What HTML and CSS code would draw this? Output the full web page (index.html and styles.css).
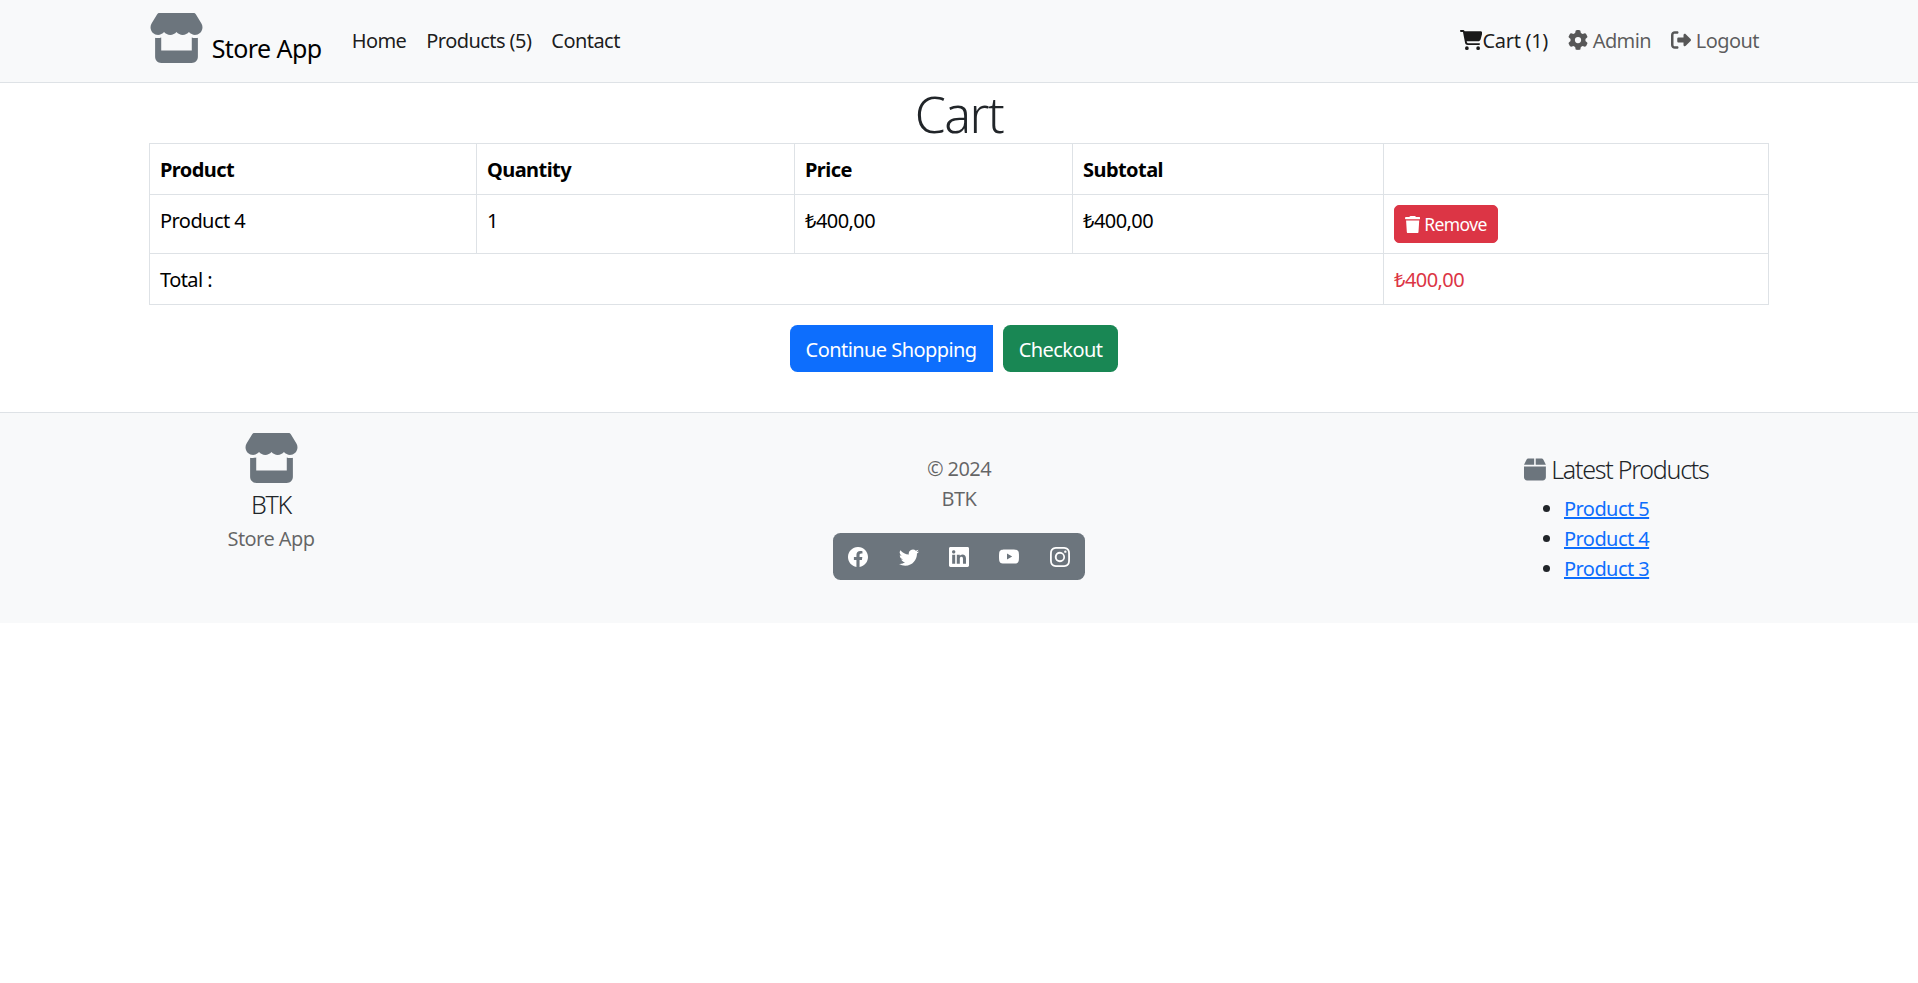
FILE: index.html
```html
<!DOCTYPE html>
<html lang="en">
<head>
  <meta charset="UTF-8" />
  <meta name="viewport" content="width=device-width, initial-scale=1.0">
  <title>Cart</title>
  <link rel="stylesheet" href="styles.css">
</head>
<body>
  <nav class="navbar">
    <div class="wrap nav-inner">
      <a class="brand" href="#">
        <svg class="store-icon" viewBox="0 0 576 512" preserveAspectRatio="none"><path d="M547.6 103.8L490.3 13.1C485.2 5 476.1 0 466.4 0H109.6C99.9 0 90.8 5 85.7 13.1L28.3 103.8c-29.6 46.8-3.4 111.9 51.9 119.4c4 .5 8.1 .8 12.1 .8c26.1 0 49.3-11.4 65.2-29c15.9 17.6 39.1 29 65.2 29c26.1 0 49.3-11.4 65.2-29c15.9 17.6 39.1 29 65.2 29c26.2 0 49.3-11.4 65.2-29c16 17.6 39.1 29 65.2 29c4.1 0 8.1-.3 12.1-.8c55.5-7.4 81.8-72.5 52.1-119.4zM499.7 254.9l-.1 0c-5.3 .7-10.7 1.1-16.2 1.1c-12.4 0-24.3-1.9-35.4-5.3V384H128V250.6c-11.2 3.5-23.2 5.4-35.6 5.4c-5.5 0-11-.4-16.3-1.1l-.1 0c-4.1-.6-8.1-1.3-12-2.3V384v64c0 35.3 28.7 64 64 64H448c35.3 0 64-28.7 64-64V384 252.6c-4 1-8 1.8-12.3 2.3z"/></svg>
        <span class="brand-text">Store App</span>
      </a>
      <ul class="nav-links">
        <li><a class="nav-link" href="#">Home</a></li>
        <li><a class="nav-link" href="#">Products (5)</a></li>
        <li><a class="nav-link" href="#">Contact</a></li>
      </ul>
      <ul class="nav-links nav-right">
        <li><a class="nav-link cart-link" href="#"><svg class="icon" viewBox="0 0 576 512"><path d="M0 24C0 10.7 10.7 0 24 0H69.5c22 0 41.5 12.8 50.6 32h411c26.3 0 45.5 25 38.6 50.4l-41 152.3c-8.5 31.4-37 53.3-69.5 53.3H170.7l5.4 28.5c2.2 11.3 12.1 19.5 23.6 19.5H488c13.3 0 24 10.7 24 24s-10.7 24-24 24H199.7c-34.6 0-64.3-24.6-70.7-58.5L77.4 54.5c-.7-3.8-4-6.5-7.9-6.5H24C10.7 48 0 37.3 0 24zM128 464a48 48 0 1 1 96 0 48 48 0 1 1 -96 0zm336-48a48 48 0 1 1 0 96 48 48 0 1 1 0-96z"/></svg>Cart (1)</a></li>
        <li><a class="nav-link muted" href="#"><svg class="icon" viewBox="0 0 512 512"><path d="M495.9 166.6c3.2 8.7 .5 18.4-6.4 24.6l-43.3 39.4c1.1 8.3 1.7 16.8 1.7 25.4s-.6 17.1-1.7 25.4l43.3 39.4c6.9 6.2 9.6 15.9 6.4 24.6c-4.4 11.9-9.7 23.3-15.8 34.3l-4.7 8.1c-6.6 11-14 21.4-22.1 31.2c-5.9 7.2-15.7 9.6-24.5 6.8l-55.7-17.7c-13.4 10.3-28.2 18.9-44 25.4l-12.5 57.1c-2 9.1-9 16.3-18.2 17.8c-13.8 2.3-28 3.5-42.5 3.5s-28.7-1.2-42.5-3.5c-9.2-1.5-16.2-8.7-18.2-17.8l-12.5-57.1c-15.8-6.5-30.6-15.1-44-25.4L83.1 425.9c-8.8 2.8-18.6 .3-24.5-6.8c-8.1-9.8-15.5-20.2-22.1-31.2l-4.7-8.1c-6.1-11-11.4-22.4-15.8-34.3c-3.2-8.7-.5-18.4 6.4-24.6l43.3-39.4C64.6 273.1 64 264.6 64 256s.6-17.1 1.7-25.4L22.4 191.2c-6.9-6.2-9.6-15.9-6.4-24.6c4.4-11.9 9.7-23.3 15.8-34.3l4.7-8.1c6.6-11 14-21.4 22.1-31.2c5.9-7.2 15.7-9.6 24.5-6.8l55.7 17.7c13.4-10.3 28.2-18.9 44-25.4l12.5-57.1c2-9.1 9-16.3 18.2-17.8C227.3 1.2 241.5 0 256 0s28.7 1.2 42.5 3.5c9.2 1.5 16.2 8.7 18.2 17.8l12.5 57.1c15.8 6.5 30.6 15.1 44 25.4l55.7-17.7c8.8-2.8 18.6-.3 24.5 6.8c8.1 9.8 15.5 20.2 22.1 31.2l4.7 8.1c6.1 11 11.4 22.4 15.8 34.3zM256 336a80 80 0 1 0 0-160 80 80 0 1 0 0 160z"/></svg> Admin</a></li>
        <li><a class="nav-link muted" href="#"><svg class="icon" viewBox="0 0 512 512"><path d="M377.9 105.9L500.7 228.7c7.2 7.2 11.3 17.1 11.3 27.3s-4.1 20.1-11.3 27.3L377.9 406.1c-6.4 6.4-15 9.9-24 9.9c-18.7 0-33.9-15.2-33.9-33.9l0-62.1-128 0c-17.7 0-32-14.3-32-32l0-64c0-17.7 14.3-32 32-32l128 0 0-62.1c0-18.7 15.2-33.9 33.9-33.9c9 0 17.6 3.6 24 9.9zM160 96L96 96c-17.7 0-32 14.3-32 32l0 256c0 17.7 14.3 32 32 32l64 0c17.7 0 32 14.3 32 32s-14.3 32-32 32l-64 0c-53 0-96-43-96-96L0 128C0 75 43 32 96 32l64 0c17.7 0 32 14.3 32 32s-14.3 32-32 32z"/></svg> Logout</a></li>
      </ul>
    </div>
  </nav>

  <main class="wrap">
    <h1 class="page-title">Cart</h1>
    <table class="cart-table">
      <colgroup>
        <col class="col-product">
        <col class="col-qty">
        <col class="col-price">
        <col class="col-subtotal">
        <col>
      </colgroup>
      <thead>
        <tr>
          <th>Product</th>
          <th>Quantity</th>
          <th>Price</th>
          <th>Subtotal</th>
          <th></th>
        </tr>
      </thead>
      <tbody>
        <tr>
          <td>Product 4</td>
          <td>1</td>
          <td>₺400,00</td>
          <td>₺400,00</td>
          <td class="action-cell">
            <button class="btn-remove"><svg class="icon" viewBox="0 0 448 512"><path d="M135.2 17.7L128 32H32C14.3 32 0 46.3 0 64S14.3 96 32 96H416c17.7 0 32-14.3 32-32s-14.3-32-32-32H320l-7.2-14.3C307.4 6.8 296.3 0 284.2 0H163.8c-12.1 0-23.2 6.8-28.6 17.7zM416 128H32L53.2 467c1.6 25.3 22.6 45 47.9 45H346.9c25.3 0 46.3-19.7 47.9-45L416 128z"/></svg> Remove</button>
          </td>
        </tr>
        <tr>
          <td colspan="4">Total :</td>
          <td class="total">₺400,00</td>
        </tr>
      </tbody>
    </table>
    <div class="cart-actions">
      <a class="btn btn-primary" href="#">Continue Shopping</a>
      <a class="btn btn-success" href="#">Checkout</a>
    </div>
  </main>

  <footer class="footer">
    <div class="wrap footer-grid">
      <div class="footer-brand">
        <svg class="store-icon" viewBox="0 0 576 512" preserveAspectRatio="none"><path d="M547.6 103.8L490.3 13.1C485.2 5 476.1 0 466.4 0H109.6C99.9 0 90.8 5 85.7 13.1L28.3 103.8c-29.6 46.8-3.4 111.9 51.9 119.4c4 .5 8.1 .8 12.1 .8c26.1 0 49.3-11.4 65.2-29c15.9 17.6 39.1 29 65.2 29c26.1 0 49.3-11.4 65.2-29c15.9 17.6 39.1 29 65.2 29c26.2 0 49.3-11.4 65.2-29c16 17.6 39.1 29 65.2 29c4.1 0 8.1-.3 12.1-.8c55.5-7.4 81.8-72.5 52.1-119.4zM499.7 254.9l-.1 0c-5.3 .7-10.7 1.1-16.2 1.1c-12.4 0-24.3-1.9-35.4-5.3V384H128V250.6c-11.2 3.5-23.2 5.4-35.6 5.4c-5.5 0-11-.4-16.3-1.1l-.1 0c-4.1-.6-8.1-1.3-12-2.3V384v64c0 35.3 28.7 64 64 64H448c35.3 0 64-28.7 64-64V384 252.6c-4 1-8 1.8-12.3 2.3z"/></svg>
        <h5 class="footer-title">BTK</h5>
        <p class="footer-sub">Store App</p>
      </div>
      <div class="footer-middle">
        <p class="copy">© 2024<br>BTK</p>
        <div class="social">
          <a href="#"><svg class="social-icon" viewBox="0 0 16 16"><path d="M16 8.049c0-4.446-3.582-8.05-8-8.05C3.58 0-.002 3.603-.002 8.05c0 4.017 2.926 7.347 6.75 7.951v-5.625h-2.03V8.05H6.75V6.275c0-2.017 1.195-3.131 3.022-3.131.876 0 1.791.157 1.791.157v1.98h-1.009c-.993 0-1.303.621-1.303 1.258v1.51h2.218l-.354 2.326H9.25V16c3.824-.604 6.75-3.934 6.75-7.951z"/></svg></a>
          <a href="#"><svg class="social-icon" viewBox="0 0 16 16"><path d="M5.026 15c6.038 0 9.341-5.003 9.341-9.334 0-.14 0-.282-.006-.422A6.685 6.685 0 0 0 16 3.542a6.658 6.658 0 0 1-1.889.518 3.301 3.301 0 0 0 1.447-1.817 6.533 6.533 0 0 1-2.087.793A3.286 3.286 0 0 0 7.875 6.03a9.325 9.325 0 0 1-6.767-3.429 3.289 3.289 0 0 0 1.018 4.382A3.323 3.323 0 0 1 .64 6.575v.045a3.288 3.288 0 0 0 2.632 3.218 3.203 3.203 0 0 1-.865.115 3.23 3.23 0 0 1-.614-.057 3.283 3.283 0 0 0 3.067 2.277A6.588 6.588 0 0 1 .78 13.58a6.32 6.32 0 0 1-.78-.045A9.344 9.344 0 0 0 5.026 15z"/></svg></a>
          <a href="#"><svg class="social-icon" viewBox="0 0 16 16"><path d="M0 1.146C0 .513.526 0 1.175 0h13.65C15.474 0 16 .513 16 1.146v13.708c0 .633-.526 1.146-1.175 1.146H1.175C.526 16 0 15.487 0 14.854V1.146zm4.943 12.248V6.169H2.542v7.225h2.401zm-1.2-8.212c.837 0 1.358-.554 1.358-1.248-.015-.709-.52-1.248-1.342-1.248-.822 0-1.359.54-1.359 1.248 0 .694.521 1.248 1.327 1.248h.016zm4.908 8.212V9.359c0-.216.016-.432.08-.586.173-.431.568-.878 1.232-.878.869 0 1.216.662 1.216 1.634v3.865h2.401V9.25c0-2.22-1.184-3.252-2.764-3.252-1.274 0-1.845.7-2.165 1.193v.025h-.016a5.54 5.54 0 0 1 .016-.025V6.169h-2.4c.03.678 0 7.225 0 7.225h2.4z"/></svg></a>
          <a href="#"><svg class="social-icon" viewBox="0 0 16 16"><path d="M8.051 1.999h.089c.822.003 4.987.033 6.11.335a2.01 2.01 0 0 1 1.415 1.42c.101.38.172.883.22 1.402l.01.104.022.26.008.104c.065.914.073 1.77.074 1.957v.075c-.001.194-.01 1.108-.082 2.06l-.008.105-.009.104c-.05.572-.124 1.14-.235 1.558a2.007 2.007 0 0 1-1.415 1.42c-1.16.312-5.569.334-6.18.335h-.142c-.309 0-1.587-.006-2.927-.052l-.17-.006-.087-.004-.171-.007-.171-.007c-1.11-.049-2.167-.128-2.654-.26a2.007 2.007 0 0 1-1.415-1.419c-.111-.417-.185-.986-.235-1.558L.09 9.82l-.008-.104A31.4 31.4 0 0 1 0 7.68v-.123c.002-.215.01-.958.064-1.778l.007-.103.003-.052.008-.104.022-.26.01-.104c.048-.519.119-1.023.22-1.402a2.007 2.007 0 0 1 1.415-1.42c.487-.13 1.544-.21 2.654-.26l.17-.007.172-.006.086-.003.171-.007A99.788 99.788 0 0 1 7.858 2h.193zM6.4 5.209v4.818l4.157-2.408L6.4 5.209z"/></svg></a>
          <a href="#"><svg class="social-icon" viewBox="0 0 16 16"><path d="M8 0C5.829 0 5.556.01 4.703.048 3.85.088 3.269.222 2.76.42a3.917 3.917 0 0 0-1.417.923A3.927 3.927 0 0 0 .42 2.76C.222 3.268.087 3.85.048 4.7.01 5.555 0 5.827 0 8.001c0 2.172.01 2.444.048 3.297.04.852.174 1.433.372 1.942.205.526.478.972.923 1.417.444.445.89.719 1.416.923.51.198 1.09.333 1.942.372C5.555 15.99 5.827 16 8 16s2.444-.01 3.298-.048c.851-.04 1.434-.174 1.943-.372a3.916 3.916 0 0 0 1.416-.923c.445-.445.718-.891.923-1.417.197-.509.332-1.09.372-1.942C15.99 10.445 16 10.173 16 8s-.01-2.445-.048-3.299c-.04-.851-.175-1.433-.372-1.941a3.926 3.926 0 0 0-.923-1.417A3.911 3.911 0 0 0 13.24.42c-.51-.198-1.092-.333-1.943-.372C10.443.01 10.172 0 7.998 0h.003zm-.717 1.442h.718c2.136 0 2.389.007 3.232.046.78.035 1.204.166 1.486.275.373.145.64.319.92.599.28.28.453.546.598.92.11.281.24.705.275 1.485.039.843.047 1.096.047 3.231s-.008 2.389-.047 3.232c-.035.78-.166 1.203-.275 1.485a2.47 2.47 0 0 1-.599.919c-.28.28-.546.453-.92.598-.28.11-.704.24-1.485.276-.843.038-1.096.047-3.232.047s-2.39-.009-3.233-.047c-.78-.036-1.203-.166-1.485-.276a2.478 2.478 0 0 1-.92-.598 2.48 2.48 0 0 1-.6-.92c-.109-.281-.24-.705-.275-1.485-.038-.843-.046-1.096-.046-3.233 0-2.136.008-2.388.046-3.231.036-.78.166-1.204.276-1.486.145-.373.319-.64.599-.92.28-.28.546-.453.92-.598.282-.11.705-.24 1.485-.276.738-.034 1.024-.044 2.515-.045v.002zm4.988 1.328a.96.96 0 1 0 0 1.92.96.96 0 0 0 0-1.92zm-4.27 1.122a4.109 4.109 0 1 0 0 8.217 4.109 4.109 0 0 0 0-8.217zm0 1.441a2.667 2.667 0 1 1 0 5.334 2.667 2.667 0 0 1 0-5.334z"/></svg></a>
        </div>
      </div>
      <div class="footer-latest">
        <h5 class="footer-title"><svg class="icon box-icon" viewBox="0 0 448 512"><path d="M50.7 58.5L0 160H208V32H93.7C75.5 32 58.9 42.3 50.7 58.5zM240 160H448L397.3 58.5C389.1 42.3 372.5 32 354.3 32H240V160zm208 32H0V416c0 35.3 28.7 64 64 64H384c35.3 0 64-28.7 64-64V192z"/></svg> Latest Products</h5>
        <ul class="latest-list">
          <li><a href="#">Product 5</a></li>
          <li><a href="#">Product 4</a></li>
          <li><a href="#">Product 3</a></li>
        </ul>
      </div>
    </div>
  </footer>
</body>
</html>
```

FILE: styles.css
```css
html {
  font-size: 20px;
}
body {
  margin: 0;
  font-family: "Noto Sans", "Open Sans", sans-serif;
  font-size: 1rem;
  line-height: 1.5;
  letter-spacing: -0.028em;
  color: #212529;
  background-color: #fff;
}
a {
  text-decoration: none;
}
ul {
  margin: 0;
  padding: 0;
}
.wrap {
  width: 1620px;
  margin: 0 auto;
}
.icon {
  height: 1em;
  fill: currentColor;
  vertical-align: -0.125em;
}

/* navbar */
.navbar {
  height: 82px;
  background-color: #f8f9fa;
  border-bottom: 1px solid #dee2e6;
}
.nav-inner {
  display: flex;
  align-items: center;
  height: 82px;
}
.brand {
  display: block;
  margin-right: 20px;
  margin-top: 2px;
  color: #000;
  white-space: nowrap;
}
.store-icon {
  height: 50px;
  width: 55px;
  fill: #6c757d;
}
.brand-text {
  margin-left: 3px;
  font-size: 1.25rem;
  vertical-align: 5px;
}
.nav-links {
  display: flex;
  list-style: none;
}
.nav-right {
  margin-left: auto;
}
.nav-link {
  display: block;
  padding: 9.5px 10px 10.5px;
  color: rgba(0, 0, 0, 0.9);
}
.muted {
  color: rgba(0, 0, 0, 0.65);
}
.cart-link {
  letter-spacing: -0.015em;
}

/* cart */
.page-title {
  margin: 0;
  height: 60px;
  font-size: 2.5rem;
  font-weight: 300;
  line-height: 62px;
  letter-spacing: -0.03em;
  text-align: center;
}
.cart-table {
  width: 100%;
  margin-bottom: 20px;
  border-collapse: collapse;
  color: #000;
}
.cart-table th,
.cart-table td {
  padding: 11px 10px 9px;
  border: 1px solid #dee2e6;
  text-align: left;
  vertical-align: top;
}
.col-product {
  width: 327px;
}
.col-qty {
  width: 318px;
}
.col-price {
  width: 278px;
}
.col-subtotal {
  width: 311px;
}
.cart-table .total {
  color: #dc3545;
}
.cart-table .action-cell {
  padding: 10px;
}
.btn-remove {
  display: block;
  padding: 5px 10px;
  border: 1px solid #dc3545;
  border-radius: 5px;
  background-color: #dc3545;
  color: #fff;
  font-family: inherit;
  font-size: 0.875rem;
  line-height: 1.5;
  letter-spacing: -0.035em;
}
.cart-actions {
  display: flex;
  justify-content: center;
  gap: 10px;
  margin-bottom: 40px;
}
.btn {
  padding: 8.5px 15px 6.5px;
  border: 1px solid transparent;
  border-radius: 7.5px;
  color: #fff;
}
.btn-primary {
  background-color: #0d6efd;
  border-top-right-radius: 0;
  border-bottom-right-radius: 0;
}
.btn-success {
  margin-right: 10px;
  background-color: #198754;
}

/* footer */
.footer {
  background-color: #f8f9fa;
  border-top: 1px solid #dee2e6;
  padding: 20px 0 19px;
}
.footer-grid {
  display: grid;
  grid-template-columns: 244px 1fr 244px;
}
.footer-brand {
  text-align: center;
  color: #6c757d;
}
.footer-brand .store-icon {
  display: block;
  margin: 0 auto;
}
.footer-title {
  margin: 0;
  font-size: 1.25rem;
  font-weight: 300;
  line-height: 30px;
  letter-spacing: -0.05em;
  color: #212529;
}
.footer-brand .footer-title {
  margin-top: 6px;
}
.footer-sub {
  margin: 5px 0 0;
  color: rgba(0, 0, 0, 0.6);
}
.footer-middle {
  padding-top: 21px;
  text-align: center;
  color: rgba(0, 0, 0, 0.6);
}
.copy {
  margin: 0 0 19px;
}
.social {
  display: inline-flex;
  width: 252px;
  height: 47px;
  border-radius: 7.5px;
  background-color: #6c757d;
}
.social a {
  display: flex;
  flex: 1;
  align-items: center;
  justify-content: center;
}
.social-icon {
  width: 20px;
  height: 20px;
  fill: #fff;
}
.footer-latest {
  margin-left: -1px;
  padding-top: 21px;
}
.box-icon {
  color: #6c757d;
}
.latest-list {
  margin: 10px 0 20px;
  padding-left: 40px;
}
.latest-list a {
  color: #0d6efd;
  text-decoration: underline;
}
```
